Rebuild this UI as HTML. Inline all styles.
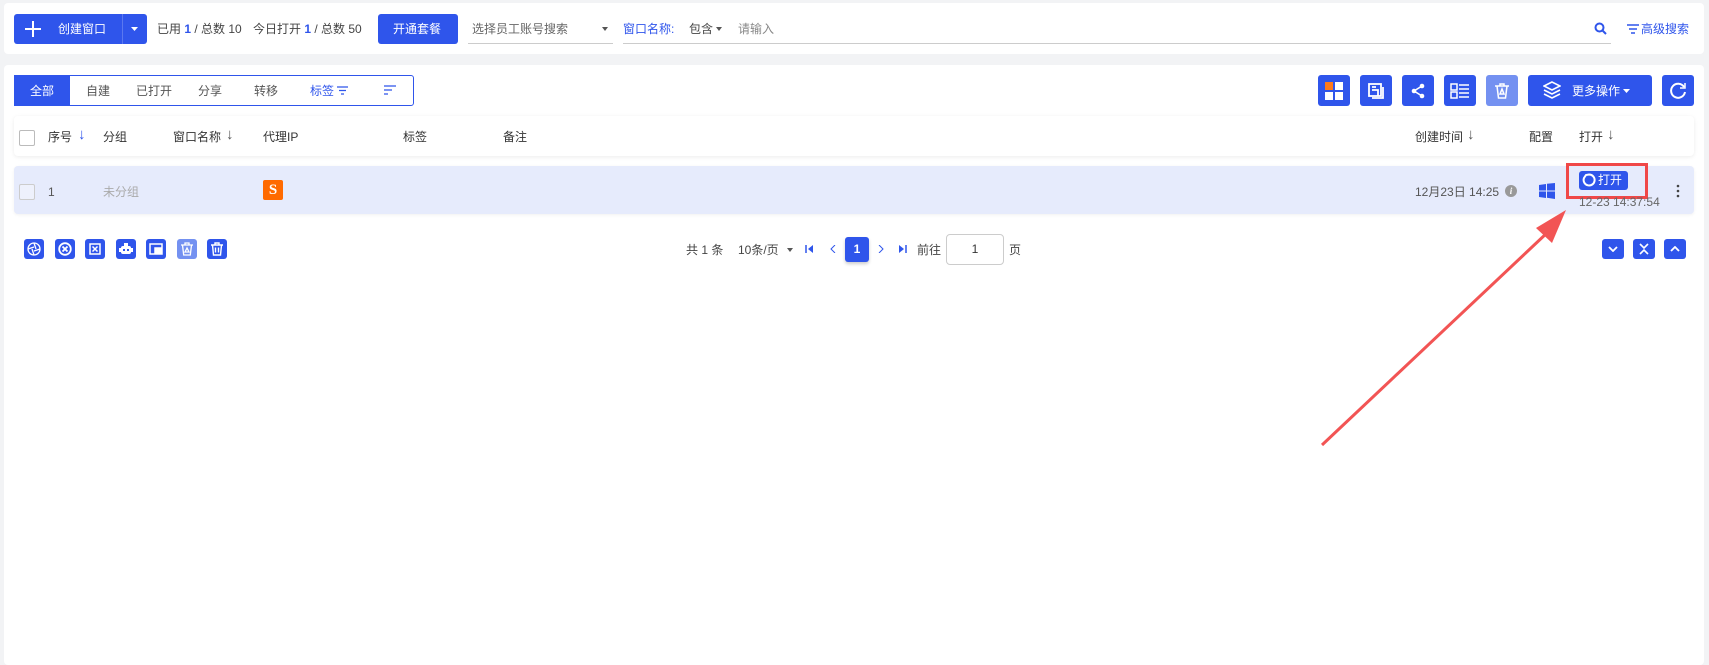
<!DOCTYPE html>
<html><head><meta charset="utf-8"><style>
*{box-sizing:border-box;margin:0;padding:0}
body{width:1709px;height:664px;background:#f2f3f5;font-family:"Liberation Sans","Noto Sans CJK SC",sans-serif;font-size:12px;color:#555;position:relative;overflow:hidden}
.a{position:absolute}
.card{background:#fff;border-radius:4px}
.btn{background:#2f55eb;border-radius:3px;color:#fff}
.ib{position:absolute;width:32px;height:31px;background:#2f55eb;border-radius:3px;display:flex;align-items:center;justify-content:center}
.sb{position:absolute;top:239px;width:20px;height:20px;background:#2f55eb;border-radius:3px;display:flex;align-items:center;justify-content:center}
.t{position:absolute;white-space:nowrap;line-height:14px}
.h{color:#333;font-size:12px}
</style></head><body>
<div class="a card" style="left:4px;top:3px;width:1700px;height:51px"></div>
<div class="a btn" style="left:14px;top:14px;width:133px;height:30px"></div>
<svg class="a" style="left:23px;top:19px" width="20" height="20"><path d="M10 2v16M2 10h16" stroke="#fff" stroke-width="2"/></svg>
<div class="t" style="left:58px;top:22px;color:#fff">创建窗口</div>
<div class="a" style="left:122px;top:14px;width:1px;height:30px;background:#5a78ef"></div>
<svg class="a" style="left:131px;top:27px" width="7" height="4"><path d="M0 0h7L3.5 4z" fill="#fff"/></svg>
<div class="t" style="left:157px;top:22px;color:#444">已用 <b style="color:#2f55eb">1</b> / 总数 10</div>
<div class="t" style="left:253px;top:22px;color:#444">今日打开 <b style="color:#2f55eb">1</b> / 总数 50</div>
<div class="a btn" style="left:378px;top:14px;width:80px;height:30px"></div>
<div class="t" style="left:393px;top:22px;color:#fff">开通套餐</div>
<div class="a" style="left:468px;top:43px;width:145px;height:1px;background:#ccc"></div>
<div class="t" style="left:472px;top:22px;color:#666">选择员工账号搜索</div>
<svg class="a" style="left:602px;top:27px" width="6" height="4"><path d="M0 0h6L3 4z" fill="#555"/></svg>
<div class="a" style="left:623px;top:43px;width:988px;height:1px;background:#ccc"></div>
<div class="t" style="left:623px;top:22px;color:#2f55eb">窗口名称:</div>
<div class="t" style="left:689px;top:22px;color:#444">包含</div>
<svg class="a" style="left:716px;top:27px" width="6" height="4"><path d="M0 0h6L3 4z" fill="#555"/></svg>
<div class="t" style="left:738px;top:22px;color:#888">请输入</div>
<svg class="a" style="left:1594px;top:22px" width="13" height="13"><circle cx="5.5" cy="5.5" r="4" stroke="#2f55eb" stroke-width="2" fill="none"/><path d="M8.5 8.5l3.5 3.5" stroke="#2f55eb" stroke-width="2"/></svg>
<svg class="a" style="left:1627px;top:24px" width="12" height="10"><path d="M0 1h12M2 5h8M4 9h4" stroke="#2f55eb" stroke-width="1.5"/></svg>
<div class="t" style="left:1641px;top:22px;color:#2f55eb">高级搜索</div>

<div class="a card" style="left:4px;top:65px;width:1700px;height:600px"></div>
<div class="a" style="left:14px;top:75px;width:400px;height:31px;border:1px solid #2f55eb;border-radius:3px"></div>
<div class="a" style="left:14px;top:75px;width:56px;height:31px;background:#2f55eb"></div>
<div class="t" style="left:30px;top:84px;color:#fff">全部</div>
<div class="t" style="left:86px;top:84px">自建</div>
<div class="t" style="left:136px;top:84px">已打开</div>
<div class="t" style="left:198px;top:84px">分享</div>
<div class="t" style="left:254px;top:84px">转移</div>
<div class="t" style="left:310px;top:84px;color:#2f55eb">标签</div>
<svg class="a" style="left:337px;top:86px" width="11" height="9"><path d="M0 1h11M2 4.5h7M4 8h3" stroke="#2f55eb" stroke-width="1.3"/></svg>
<svg class="a" style="left:384px;top:85px" width="12" height="10"><path d="M0 1h12M0 5h8M0 9h4" stroke="#2f55eb" stroke-width="1.3"/></svg>

<div class="ib" style="left:1318px;top:75px"><svg width="18" height="18"><rect x="0" y="0" width="8" height="8" fill="#ff7a1a"/><rect x="10" y="0" width="8" height="8" fill="#fff"/><rect x="0" y="10" width="8" height="8" fill="#fff"/><rect x="10" y="10" width="8" height="8" fill="#fff"/></svg></div>
<div class="ib" style="left:1360px;top:75px"><svg width="16" height="16" fill="none" stroke="#fff" stroke-width="1.8"><rect x="1" y="1" width="12" height="12"/><path d="M4 7h6v6M4 4h4M15 4v11H4"/></svg></div>
<div class="ib" style="left:1402px;top:75px"><svg width="16" height="16"><circle cx="12" cy="3" r="2.3" fill="#fff"/><circle cx="4" cy="8" r="2.3" fill="#fff"/><circle cx="12" cy="13" r="2.3" fill="#fff"/><path d="M12 3L4 8l8 5" stroke="#fff" stroke-width="1.6" fill="none"/></svg></div>
<div class="ib" style="left:1444px;top:75px"><svg width="20" height="16" fill="none" stroke="#fff" stroke-width="1.5"><rect x="1" y="1" width="6" height="6"/><rect x="1" y="9" width="6" height="6"/><path d="M9 2h10M9 6h10M9 10h10M9 14h10"/></svg></div>
<div class="ib" style="left:1486px;top:75px;background:#7491f1"><svg width="14" height="16" fill="none" stroke="#fff" stroke-width="1.5"><path d="M0 3h14M5 3V1h4v2M2 3l1.5 12h7L12 3M7 6l-2 5h4z"/></svg></div>
<div class="a btn" style="left:1528px;top:75px;width:124px;height:31px"></div>
<svg class="a" style="left:1543px;top:81px" width="18" height="18" fill="none" stroke="#fff" stroke-width="1.6"><path d="M9 1L1 5l8 4 8-4z"/><path d="M1 9l8 4 8-4M1 13l8 4 8-4"/></svg>
<div class="t" style="left:1572px;top:84px;color:#fff">更多操作</div>
<svg class="a" style="left:1623px;top:89px" width="7" height="4"><path d="M0 0h7L3.5 4z" fill="#fff"/></svg>
<div class="ib" style="left:1662px;top:75px"><svg width="18" height="18" fill="none" stroke="#fff" stroke-width="2"><path d="M15 5A7 7 0 1 0 16 10"/><path d="M16 1v5h-5" stroke-width="1.5"/></svg></div>

<div class="a" style="left:14px;top:116px;width:1680px;height:40px;background:#fff;box-shadow:0 1px 4px rgba(0,0,0,.08);border-radius:4px"></div>
<div class="a" style="left:19px;top:130px;width:16px;height:16px;border:1px solid #bbb;border-radius:2px;background:#fff"></div>
<div class="t h" style="left:48px;top:130px">序号</div>
<div class="t" style="left:78px;top:128px;color:#2f55eb;font-size:15px">↓</div>
<div class="t h" style="left:103px;top:130px">分组</div>
<div class="t h" style="left:173px;top:130px">窗口名称</div>
<div class="t" style="left:226px;top:128px;color:#555;font-size:15px">↓</div>
<div class="t h" style="left:263px;top:130px">代理IP</div>
<div class="t h" style="left:403px;top:130px">标签</div>
<div class="t h" style="left:503px;top:130px">备注</div>
<div class="t h" style="left:1415px;top:130px">创建时间</div>
<div class="t" style="left:1467px;top:128px;color:#555;font-size:15px">↓</div>
<div class="t h" style="left:1529px;top:130px">配置</div>
<div class="t h" style="left:1579px;top:130px">打开</div>
<div class="t" style="left:1607px;top:128px;color:#555;font-size:15px">↓</div>

<div class="a" style="left:14px;top:166px;width:1680px;height:48px;background:#e6ebfc;border-radius:4px;box-shadow:0 1px 3px rgba(0,0,0,.06)"></div>
<div class="a" style="left:19px;top:184px;width:16px;height:16px;border:1px solid #ccc;border-radius:2px;background:#eef1fc"></div>
<div class="t" style="left:48px;top:185px;color:#555">1</div>
<div class="t" style="left:103px;top:185px;color:#aaa">未分组</div>
<div class="a" style="left:263px;top:180px;width:20px;height:20px;background:#ff6a00;border-radius:2px;color:#fff;font:bold 15px 'Liberation Serif',serif;text-align:center;line-height:20px">S</div>
<div class="t" style="left:1415px;top:185px;color:#555">12月23日 14:25</div>
<div class="a" style="left:1505px;top:185px;width:12px;height:12px;border-radius:50%;background:#999;color:#fff;font:italic bold 9px serif;text-align:center;line-height:12px">i</div>
<svg class="a" style="left:1539px;top:183px" width="16" height="16"><path d="M0 2l7-1v6.5H0zM8 .8L16 0v7.5H8zM0 8.5h7V15l-7-1zM8 8.5h8V16l-8-1.2z" fill="#2f55eb"/></svg>
<div class="a" style="left:1579px;top:171px;width:49px;height:19px;background:#2f55eb;border-radius:3px"></div>
<svg class="a" style="left:1582px;top:173px" width="14" height="14"><path d="M7 1.5a5.5 5.5 0 1 1-5 3.5L4 2z" fill="none" stroke="#fff" stroke-width="2"/></svg>
<div class="t" style="left:1598px;top:173px;color:#fff">打开</div>
<div class="a" style="left:1566px;top:163px;width:82px;height:36px;border:3px solid #f04848"></div>
<div class="t" style="left:1579px;top:195px;color:#666">12-23 14:37:54</div>
<svg class="a" style="left:1675px;top:184px" width="6" height="14"><circle cx="3" cy="2" r="1.3" fill="#444"/><circle cx="3" cy="7" r="1.3" fill="#444"/><circle cx="3" cy="12" r="1.3" fill="#444"/></svg>

<div class="sb" style="left:24px"><svg width="14" height="14" fill="none" stroke="#fff" stroke-width="1.3"><circle cx="7" cy="7" r="6"/><path d="M7 1l2 6M13 7l-6 2M7 13L5 7M1 7l6-2"/></svg></div>
<div class="sb" style="left:55px"><svg width="14" height="14" fill="none" stroke="#fff" stroke-width="1.8"><circle cx="7" cy="7" r="5.8"/><path d="M4.5 4.5l5 5M9.5 4.5l-5 5"/></svg></div>
<div class="sb" style="left:85px"><svg width="12" height="12" fill="none" stroke="#fff" stroke-width="1.5"><rect x="1" y="1" width="10" height="10"/><path d="M3.5 3.5l5 5M8.5 3.5l-5 5"/></svg></div>
<div class="sb" style="left:116px"><svg width="14" height="14" fill="#fff"><rect x="2" y="4" width="10" height="8" rx="2"/><rect x="5" y="1" width="4" height="3"/><rect x="0" y="6" width="2" height="4"/><rect x="12" y="6" width="2" height="4"/><rect x="4" y="7" width="2" height="2" fill="#2f55eb"/><rect x="8" y="7" width="2" height="2" fill="#2f55eb"/></svg></div>
<div class="sb" style="left:146px"><svg width="14" height="12" fill="none" stroke="#fff" stroke-width="1.5"><rect x="1" y="1" width="12" height="10"/><rect x="6" y="5" width="6" height="5" fill="#fff"/></svg></div>
<div class="sb" style="left:177px;background:#7491f1"><svg width="12" height="14" fill="none" stroke="#fff" stroke-width="1.3"><path d="M0 3h12M4 3V1h4v2M1.5 3l1.2 10h6.6L10.5 3M6 6l-2 4h4z"/></svg></div>
<div class="sb" style="left:207px"><svg width="12" height="14" fill="none" stroke="#fff" stroke-width="1.4"><path d="M0 3h12M4 3V1h4v2M1.5 3l1 10h7l1-10M4.5 5.5v5M7.5 5.5v5"/></svg></div>

<div class="t" style="left:686px;top:243px;color:#444">共 1 条</div>
<div class="t" style="left:738px;top:243px;color:#444">10条/页</div>
<svg class="a" style="left:787px;top:248px" width="6" height="4"><path d="M0 0h6L3 4z" fill="#555"/></svg>
<svg class="a" style="left:805px;top:245px" width="8" height="8"><path d="M1 0v8" stroke="#2f55eb" stroke-width="1.5"/><path d="M8 0v8L3 4z" fill="#2f55eb"/></svg>
<svg class="a" style="left:830px;top:245px" width="6" height="8"><path d="M5 0L1 4l4 4" stroke="#2f55eb" fill="none"/></svg>
<div class="a btn" style="left:845px;top:237px;width:24px;height:25px;text-align:center;line-height:25px;font-weight:bold;box-shadow:0 2px 3px rgba(0,0,0,.2)">1</div>
<svg class="a" style="left:878px;top:245px" width="6" height="8"><path d="M1 0l4 4-4 4" stroke="#2f55eb" fill="none"/></svg>
<svg class="a" style="left:899px;top:245px" width="8" height="8"><path d="M7 0v8" stroke="#2f55eb" stroke-width="1.5"/><path d="M0 0v8L5 4z" fill="#2f55eb"/></svg>
<div class="t" style="left:917px;top:243px;color:#444">前往</div>
<div class="a" style="left:946px;top:234px;width:58px;height:31px;border:1px solid #ccc;border-radius:4px;text-align:center;line-height:29px;color:#333">1</div>
<div class="t" style="left:1009px;top:243px;color:#444">页</div>

<div class="sb" style="left:1602px;width:22px"><svg width="10" height="6"><path d="M1 1l4 4 4-4" stroke="#fff" stroke-width="1.8" fill="none"/></svg></div>
<div class="sb" style="left:1633px;width:22px"><svg width="10" height="12" fill="none" stroke="#fff" stroke-width="1.6"><path d="M1 1l4 4 4-4M1 11l4-4 4 4"/></svg></div>
<div class="sb" style="left:1664px;width:22px"><svg width="10" height="6"><path d="M1 5l4-4 4 4" stroke="#fff" stroke-width="1.8" fill="none"/></svg></div>

<svg class="a" style="left:0;top:0" width="1709" height="664"><path d="M1322 445L1548 232" stroke="#f25454" stroke-width="3"/><path d="M1566 210L1536 228L1552 243z" fill="#f25454"/></svg>
</body></html>
